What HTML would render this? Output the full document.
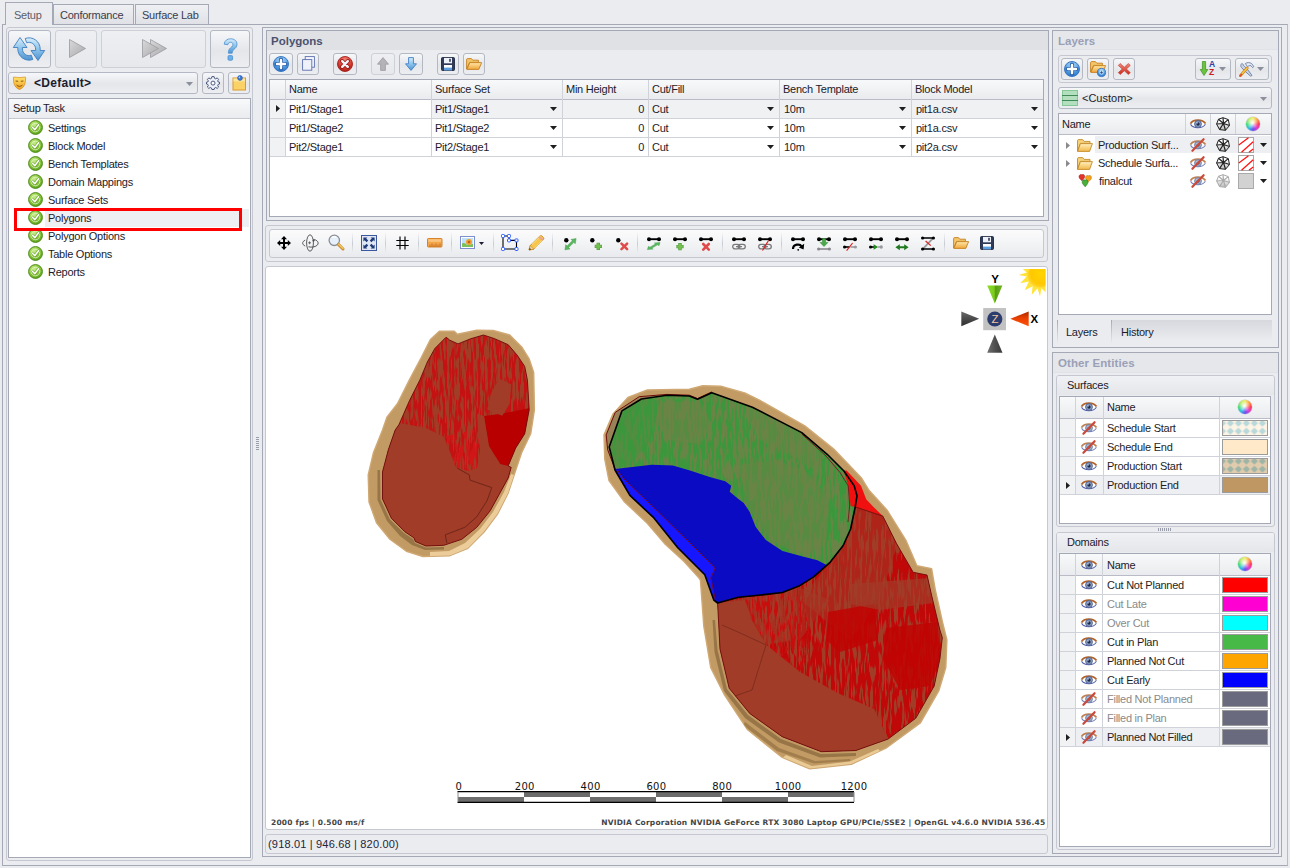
<!DOCTYPE html>
<html><head><meta charset="utf-8"><title>Polygons</title>
<style>
*{box-sizing:border-box;margin:0;padding:0}
html,body{width:1290px;height:868px;overflow:hidden}
body{background:#ebecf0;font-family:"Liberation Sans",sans-serif;font-size:11px;color:#1b1b2b;position:relative;letter-spacing:-0.25px}
.a{position:absolute}
.bd{border:1px solid #a5a9b5}
.bl{border:1px solid #c5c8d0;border-radius:3px}
.w{background:#fff}
.t{position:absolute;white-space:nowrap;line-height:13px}
.btn{position:absolute;border:1px solid #b4b8c2;border-radius:3px;background:linear-gradient(#f6f7f9,#e4e6ea 55%,#eceef1)}
.btnd{position:absolute;border:1px solid #cdd0d7;border-radius:3px;background:linear-gradient(#eeeff2,#e6e8ec)}
.hd{background:linear-gradient(#f8f9fa,#e9ebee)}
svg{position:absolute;overflow:visible}
.cw{position:absolute;width:14px;height:14px;border-radius:50%;background:radial-gradient(circle at 45% 42%,#fff 0,rgba(255,255,255,0.7) 18%,rgba(255,255,255,0) 55%),conic-gradient(from 0deg,#e8e84a 0,#ff9a3a 12%,#ff3a5a 25%,#e040d0 38%,#6a50f0 50%,#30c0e8 62%,#30d868 75%,#a8e840 88%,#e8e84a 100%);box-shadow:0 0 0 0.5px #c8c8d0}
</style></head><body>

<!-- ============ TABS ============ -->
<div class="a" style="left:2px;top:24px;width:1286px;height:842px;border:1px solid #a5a9b5;border-right-color:#b9bcc6"></div>
<div class="a" style="left:53px;top:4px;width:81px;height:21px;border:1px solid #a5a9b5;background:linear-gradient(#eff0f3,#dfe1e6)"></div>
<div class="a" style="left:135px;top:4px;width:74px;height:21px;border:1px solid #a5a9b5;background:linear-gradient(#eff0f3,#dfe1e6)"></div>
<div class="a" style="left:5px;top:2px;width:48px;height:23px;border:1px solid #a5a9b5;border-bottom:none;background:#ebecef"></div>
<div class="t" style="left:14px;top:9px;color:#5a5d6b">Setup</div>
<div class="t" style="left:60px;top:9px;color:#3a3d4d">Conformance</div>
<div class="t" style="left:142px;top:9px;color:#3a3d4d">Surface Lab</div>

<!-- ============ LEFT PANEL ============ -->
<svg width="0" height="0" style="left:0;top:0"><defs>
<radialGradient id="gchk" cx="0.4" cy="0.3" r="0.8"><stop offset="0" stop-color="#c9ee8a"/><stop offset="0.55" stop-color="#86c536"/><stop offset="1" stop-color="#4e9a12"/></radialGradient>
<linearGradient id="gblue" x1="0" y1="0" x2="0" y2="1"><stop offset="0" stop-color="#d8eefb"/><stop offset="0.5" stop-color="#8cc3ea"/><stop offset="1" stop-color="#4f93d2"/></linearGradient>
<linearGradient id="ggray" x1="0" y1="0" x2="1" y2="1"><stop offset="0" stop-color="#d9d9db"/><stop offset="1" stop-color="#a9a9ad"/></linearGradient>
<linearGradient id="gyel" x1="0" y1="0" x2="0" y2="1"><stop offset="0" stop-color="#ffe36a"/><stop offset="1" stop-color="#f0a020"/></linearGradient>
<g id="chk"><circle cx="7.5" cy="7.5" r="6.9" fill="url(#gchk)" stroke="#4f8a1b" stroke-width="1"/><circle cx="7.5" cy="7.5" r="4.3" fill="none" stroke="#e9f7d0" stroke-width="0.9" opacity="0.85"/><path d="M4.6 7.6 L6.8 9.9 L10.6 4.9" fill="none" stroke="#3d6f12" stroke-width="2.6" stroke-linecap="round" stroke-linejoin="round" opacity="0.55"/><path d="M4.6 7.4 L6.8 9.7 L10.6 4.7" fill="none" stroke="#fff" stroke-width="1.5" stroke-linecap="round" stroke-linejoin="round"/></g>
<g id="eye"><path d="M0.6 6 C3 1.6 12.5 1.6 15.4 6 C12.5 10.6 3 10.6 0.6 6 Z" fill="#fff"/><path d="M0.6 6.3 C3 10.9 12.5 10.9 15.4 6.3" fill="none" stroke="#4e5ca8" stroke-width="1.1"/><path d="M0.5 5.6 C3 0.9 12.5 0.9 15.5 5.6" fill="none" stroke="#b0622a" stroke-width="1.8"/><circle cx="8" cy="6" r="3.4" fill="#8fa3c8" stroke="#4a5c8a" stroke-width="0.9"/><circle cx="8" cy="6" r="1.7" fill="#1d2a4a"/><circle cx="7.1" cy="4.9" r="0.7" fill="#e6eefc"/></g>
<g id="eyeoff"><use href="#eye" opacity="0.8"/><path d="M2.4 11.8 L13.6 0.2" stroke="#c94a3a" stroke-width="2.2" stroke-linecap="round"/></g>
<g id="wire" stroke-width="1"><path d="M7 0.7 L12.3 2.6 L13.5 8.5 L9.5 13.3 L3.5 12.6 L0.6 7 L2.5 2.2 Z" fill="url(#gwire)"/><path d="M7.5 6.5 L7 0.7 M7.5 6.5 L12.3 2.6 M7.5 6.5 L13.5 8.5 M7.5 6.5 L9.5 13.3 M7.5 6.5 L3.5 12.6 M7.5 6.5 L0.6 7 M7.5 6.5 L2.5 2.2" fill="none" stroke-width="1.2"/></g>
<linearGradient id="gwire" x1="0" y1="0" x2="0" y2="1"><stop offset="0.3" stop-color="#fff"/><stop offset="1" stop-color="#b8b8b8"/></linearGradient>
<g id="fold"><path d="M0.5 12.2 L0.5 1.6 C0.5 1 1 0.6 1.6 0.6 L5.6 0.6 L7.2 2.4 L13 2.4 L13 4.4 L3.4 4.4 Z" fill="#f6d27a" stroke="#c48a2a" stroke-width="0.9" stroke-linejoin="round"/><path d="M0.6 12.4 L3.4 4.6 L15.4 4.6 L12.6 12.4 Z" fill="url(#gfold)" stroke="#c48a2a" stroke-width="0.9" stroke-linejoin="round"/></g>
<linearGradient id="gfold" x1="0" y1="0" x2="0" y2="1"><stop offset="0" stop-color="#fff0c0"/><stop offset="1" stop-color="#f2b84a"/></linearGradient>
<g id="hearts"><path d="M4 0.8 C5.5 -0.2 7 1 6.6 3 C6.3 4.6 5 5.8 4 6.8 C3 5.8 1.2 4.6 1 3 C0.8 1 2.6 -0.2 4 0.8 Z" fill="#e4332a" stroke="#9a1a14" stroke-width="0.5"/><path d="M10.5 1.8 C12 0.8 13.8 2 13.4 4 C13.1 5.6 11.5 6.8 10.5 7.8 C9.5 6.8 7.8 5.6 7.6 4 C7.4 2 9 0.8 10.5 1.8 Z" fill="#f6a21c" stroke="#b06a0a" stroke-width="0.5"/><path d="M7.2 6.2 C8.7 5.2 10.4 6.4 10 8.4 C9.7 10 8.2 11.6 7.2 12.8 C6.2 11.6 4.4 10 4.2 8.4 C4 6.4 5.7 5.2 7.2 6.2 Z" fill="#49b03a" stroke="#226a18" stroke-width="0.5"/></g>
<radialGradient id="gbl2" cx="0.5" cy="0.25" r="0.8"><stop offset="0" stop-color="#b9defa"/><stop offset="0.6" stop-color="#4d9be0"/><stop offset="1" stop-color="#2a6cc0"/></radialGradient>
<radialGradient id="grd2" cx="0.5" cy="0.25" r="0.8"><stop offset="0" stop-color="#f28a80"/><stop offset="0.6" stop-color="#d8362c"/><stop offset="1" stop-color="#a81a14"/></radialGradient>
<g id="addc"><circle cx="8" cy="8" r="7.5" fill="url(#gbl2)" stroke="#2f6fc0" stroke-width="0.9"/><path d="M8 3.6 V12.4 M3.6 8 H12.4" stroke="#2c62aa" stroke-width="4.2" stroke-linecap="round"/><path d="M8 4 V12 M4 8 H12" stroke="#fff" stroke-width="2.4" stroke-linecap="round"/></g>
<g id="delc"><circle cx="8" cy="8" r="7.5" fill="url(#grd2)" stroke="#a3211a" stroke-width="0.9"/><path d="M5 5 L11 11 M11 5 L5 11" stroke="#9c1d17" stroke-width="4" stroke-linecap="round"/><path d="M5.2 5.2 L10.8 10.8 M10.8 5.2 L5.2 10.8" stroke="#f4f4fa" stroke-width="2.4" stroke-linecap="round"/></g>
<linearGradient id="gfo" x1="0" y1="0" x2="0" y2="1"><stop offset="0" stop-color="#ffe7a8"/><stop offset="1" stop-color="#f0a63a"/></linearGradient>
<g id="fopen"><path d="M0.6 11 L0.6 1.6 C0.6 1 1 0.6 1.6 0.6 L5.4 0.6 L6.8 2.2 L12.4 2.2 L12.4 4.4 L3.6 4.4 Z" fill="#f4c66a" stroke="#c4801f" stroke-width="0.9" stroke-linejoin="round"/><path d="M0.8 11.4 L3.8 4.6 L15.6 4.6 L12.8 11.4 Z" fill="url(#gfo)" stroke="#c4801f" stroke-width="0.9" stroke-linejoin="round"/></g>
<g id="floppy"><rect x="0.5" y="0.5" width="13" height="13" rx="1" fill="#2f3b58" stroke="#1d2740" stroke-width="0.9"/><rect x="3" y="0.9" width="8" height="5.4" fill="#eef1f8"/><rect x="8.2" y="1.8" width="1.6" height="3" fill="#2f3b58"/><rect x="3" y="8" width="8" height="5.2" fill="#fff"/><rect x="3" y="10.6" width="8" height="2.6" fill="#5aa0e0"/></g>
<g id="bar"><path d="M2 2.2 H12" stroke="#000" stroke-width="1.9"/><circle cx="2" cy="2.2" r="2" fill="#000"/><circle cx="12" cy="2.2" r="2" fill="#000"/></g>
<g id="gplus"><path d="M4 0.4 V7.6 M0.4 4 H7.6" stroke="#4f9a3a" stroke-width="3.4"/><path d="M4 0.9 V7.1 M0.9 4 H7.1" stroke="#74c050" stroke-width="2.2"/></g>
<g id="rx"><path d="M1.2 1.2 L6.8 6.8 M6.8 1.2 L1.2 6.8" stroke="#e04a4a" stroke-width="2.6" stroke-linecap="round"/></g>
<g id="garr"><path d="M0.4 11.6 L1.25 6.5 L2.6 7.85 L7.85 2.6 L6.5 1.25 L11.6 0.4 L10.75 5.5 L9.4 4.15 L4.15 9.4 L5.5 10.75 Z" fill="#5cb860" stroke="#3d9a4a" stroke-width="0.5"/></g>
<g id="chain"><rect x="0.7" y="0.7" width="7.2" height="4.6" rx="2.3" fill="none" stroke="#7a7a7e" stroke-width="1.3"/><rect x="6.1" y="0.7" width="7.2" height="4.6" rx="2.3" fill="none" stroke="#7a7a7e" stroke-width="1.3"/><path d="M4 3 H10" stroke="#7a7a7e" stroke-width="1.2"/></g>
<path id="dd" d="M0 0 L7 0 L3.5 4 Z"/>
</defs></svg>
<div id="left">
<div class="a bl" style="left:6px;top:27px;width:247px;height:834px"></div>
<div class="btn" style="left:8px;top:30px;width:43px;height:38px"></div>
<div class="btnd" style="left:55px;top:30px;width:42px;height:38px"></div>
<div class="btnd" style="left:101px;top:30px;width:105px;height:38px"></div>
<div class="btn" style="left:210px;top:30px;width:40px;height:38px"></div>
<!-- refresh icon -->
<svg style="left:13px;top:37px" width="32" height="24" viewBox="0 0 32 24">
<path d="M7 0.5 L14 10.5 L9.4 10.5 L9.4 12 A6.6 6.6 0 0 0 18.3 18.2 L19.8 22.5 A11.2 11.2 0 0 1 4.8 12 L4.8 10.5 L0.3 10.5 Z" fill="url(#gblue)" stroke="#3f7fc0" stroke-width="0.9" stroke-linejoin="round"/>
<path d="M25 23.5 L18 13.5 L22.6 13.5 L22.6 12 A6.6 6.6 0 0 0 13.7 5.8 L12.2 1.5 A11.2 11.2 0 0 1 27.2 12 L27.2 13.5 L31.7 13.5 Z" fill="url(#gblue)" stroke="#3f7fc0" stroke-width="0.9" stroke-linejoin="round"/>
</svg>
<!-- play / ff -->
<svg style="left:69px;top:39px" width="17" height="19"><path d="M0.5 0.5 L16.5 9.5 L0.5 18.5 Z" fill="url(#ggray)" stroke="#9a9a9e" stroke-width="0.8"/></svg>
<svg style="left:142px;top:39px" width="26" height="19"><path d="M8.5 0.5 L24.5 9.5 L8.5 18.5 Z" fill="url(#ggray)" stroke="#9a9a9e" stroke-width="0.8"/><path d="M0.5 0.5 L16.5 9.5 L0.5 18.5 Z" fill="url(#ggray)" stroke="#9a9a9e" stroke-width="0.8"/></svg>
<!-- question -->
<svg style="left:223px;top:38px" width="15" height="23" viewBox="0 0 15 23">
<path d="M1.2 6.2 C1.5 2.5 4.3 0.8 7.6 0.8 C11.3 0.8 14 2.9 14 6.3 C14 9 12.3 10.3 10.8 11.6 C9.6 12.6 9.2 13.4 9.2 15.2 L5.4 15.2 C5.3 12.6 6 11.2 7.6 9.8 C8.9 8.7 9.9 7.9 9.9 6.5 C9.9 5.1 8.9 4.3 7.5 4.3 C6 4.3 5.1 5.2 4.9 6.7 Z" fill="url(#gblue)" stroke="#4a8fd3" stroke-width="0.8"/>
<rect x="5" y="17.6" width="4.6" height="4.6" rx="1" fill="#6fb0e8" stroke="#4a8fd3" stroke-width="0.8"/>
</svg>
<div class="btn" style="left:8px;top:72px;width:190px;height:22px"></div>
<div class="btn" style="left:202px;top:72px;width:22px;height:22px"></div>
<div class="btn" style="left:228px;top:72px;width:22px;height:22px"></div>
<!-- mask -->
<svg style="left:13px;top:76px" width="13" height="14" viewBox="0 0 13 14">
<path d="M0.5 1.2 C2.5 0.9 4 1.6 6.5 1.6 C9 1.6 10.5 0.9 12.5 1.2 C12.8 6 12 11.5 6.5 13.5 C1 11.5 0.2 6 0.5 1.2 Z" fill="url(#gyel)" stroke="#d98a14" stroke-width="0.7"/>
<path d="M2.6 5 L5.2 5.3 M7.8 5.3 L10.4 5" stroke="#7a4a08" stroke-width="0.9" fill="none"/>
<path d="M3.6 9 C5 10.8 8 10.8 9.4 9" stroke="#7a4a08" stroke-width="0.9" fill="none"/>
</svg>
<div class="t" style="left:34px;top:77px;font-weight:bold;font-size:12px;letter-spacing:0.3px;color:#1a1c2e">&lt;Default&gt;</div>
<svg style="left:186px;top:82px" width="7" height="4"><use href="#dd" fill="#8c8f9c"/></svg>
<!-- gear -->
<svg style="left:206px;top:76px" width="14" height="14" viewBox="0 0 14 14">
<path d="M5.9 0.6 L8.1 0.6 L8.5 2.3 L9.7 2.8 L11.2 1.9 L12.6 3.4 L11.7 4.8 L12.2 6 L13.5 6.2 L13.5 8 L12.2 8.4 L11.7 9.5 L12.6 11 L11.2 12.4 L9.7 11.5 L8.5 12 L8.1 13.5 L5.9 13.5 L5.5 12 L4.3 11.5 L2.8 12.4 L1.4 11 L2.3 9.5 L1.8 8.4 L0.5 8 L0.5 6.2 L1.8 6 L2.3 4.8 L1.4 3.4 L2.8 1.9 L4.3 2.8 L5.5 2.3 Z" fill="#eef1f7" stroke="#3b4a74" stroke-width="0.9" stroke-linejoin="round"/>
<circle cx="7" cy="7.1" r="2" fill="#fff" stroke="#3b4a74" stroke-width="0.9"/>
</svg>
<!-- note -->
<svg style="left:232px;top:75px" width="15" height="16" viewBox="0 0 15 16">
<rect x="1" y="3" width="12.5" height="12" fill="#fbd268" stroke="#dc9a2c" stroke-width="1"/>
<rect x="1.5" y="3.5" width="11.5" height="3" fill="#fde59a"/>
<circle cx="8" cy="3" r="2.4" fill="#3b78d8" stroke="#1f4fa8" stroke-width="0.6"/><circle cx="7.4" cy="2.4" r="0.8" fill="#b8d4ff"/>
</svg>
<div class="a bd w" style="left:8px;top:98px;width:243px;height:760px"></div>
<div class="a hd" style="left:9px;top:99px;width:241px;height:20px;border-bottom:1px solid #c5c8d0"></div>
<div class="t" style="left:13px;top:102px">Setup Task</div>
<div class="a" style="left:45px;top:209px;width:204px;height:18px;background:#eeeff2"></div>
<svg style="left:28px;top:120.1px" width="15" height="15"><use href="#chk"/></svg><div class="t" style="left:48px;top:122px">Settings</div>
<svg style="left:28px;top:138.1px" width="15" height="15"><use href="#chk"/></svg><div class="t" style="left:48px;top:140px">Block Model</div>
<svg style="left:28px;top:156.1px" width="15" height="15"><use href="#chk"/></svg><div class="t" style="left:48px;top:158px">Bench Templates</div>
<svg style="left:28px;top:174.1px" width="15" height="15"><use href="#chk"/></svg><div class="t" style="left:48px;top:176px">Domain Mappings</div>
<svg style="left:28px;top:192.1px" width="15" height="15"><use href="#chk"/></svg><div class="t" style="left:48px;top:194px">Surface Sets</div>
<svg style="left:28px;top:210.1px" width="15" height="15"><use href="#chk"/></svg><div class="t" style="left:48px;top:212px">Polygons</div>
<svg style="left:28px;top:228.1px" width="15" height="15"><use href="#chk"/></svg><div class="t" style="left:48px;top:230px">Polygon Options</div>
<svg style="left:28px;top:246.1px" width="15" height="15"><use href="#chk"/></svg><div class="t" style="left:48px;top:248px">Table Options</div>
<svg style="left:28px;top:264.1px" width="15" height="15"><use href="#chk"/></svg><div class="t" style="left:48px;top:266px">Reports</div>
<div class="a" style="left:14px;top:208px;width:228px;height:23px;border:3px solid #f00"></div>
</div>

<svg style="left:256px;top:437px" width="3" height="14"><path d="M0 0.5 H3 M0 2.5 H3 M0 4.5 H3 M0 6.5 H3 M0 8.5 H3 M0 10.5 H3 M0 12.5 H3" stroke="#9a9eab" stroke-width="1"/></svg>
<!-- ============ CENTER ============ -->
<div id="center">
<div class="a bd" style="left:262px;top:27px;width:1020px;height:830px"></div>
<div class="a bd" style="left:266px;top:30px;width:783px;height:191px"></div>
<div class="a" style="left:267px;top:31px;width:781px;height:19px;background:#dfe1e5"></div>
<div class="t" style="left:271px;top:35px;font-weight:bold;font-size:11.5px;color:#4a5170;letter-spacing:0">Polygons</div>
<div class="btn" style="left:269px;top:53px;width:24px;height:22px"></div>
<div class="btn" style="left:297px;top:53px;width:22px;height:22px"></div>
<div class="btn" style="left:333px;top:53px;width:24px;height:22px"></div>
<div class="btnd" style="left:371px;top:53px;width:24px;height:22px"></div>
<div class="btn" style="left:399px;top:53px;width:24px;height:22px"></div>
<div class="btn" style="left:437px;top:53px;width:22px;height:22px"></div>
<div class="btn" style="left:463px;top:53px;width:22px;height:22px"></div>
<svg style="left:273px;top:56px" width="16" height="16"><use href="#addc"/></svg>
<svg style="left:302px;top:56px" width="13" height="15"><rect x="3.2" y="0.6" width="9.2" height="10.6" fill="#f4f6fc" stroke="#5c6fb0" stroke-width="0.9"/><rect x="0.6" y="3.6" width="9.2" height="10.6" fill="#eef1fa" stroke="#5c6fb0" stroke-width="0.9"/></svg>
<svg style="left:337px;top:56px" width="16" height="16"><use href="#delc"/></svg>
<svg style="left:377px;top:57px" width="12" height="14"><path d="M6 0.6 L11.5 7.2 L8.4 7.2 L8.4 13.4 L3.6 13.4 L3.6 7.2 L0.5 7.2 Z" fill="#b4b4b8" stroke="#9c9ca0" stroke-width="0.8" stroke-linejoin="round"/></svg>
<svg style="left:405px;top:57px" width="12" height="14"><path d="M6 13.4 L11.5 6.8 L8.4 6.8 L8.4 0.6 L3.6 0.6 L3.6 6.8 L0.5 6.8 Z" fill="url(#gblue)" stroke="#3f7fc8" stroke-width="0.9" stroke-linejoin="round"/></svg>
<svg style="left:441px;top:57px" width="14" height="14"><use href="#floppy"/></svg>
<svg style="left:466px;top:58px" width="16" height="12"><use href="#fopen"/></svg>

<div class="a bd w" style="left:269px;top:79px;width:775px;height:138px"></div>
<div class="a hd" style="left:270px;top:80px;width:773px;height:19px"></div>
<div class="a" style="left:270px;top:99px;width:773px;height:1px;background:#b9bcc6"></div>
<div class="a" style="left:285px;top:80px;width:1px;height:77px;background:#cfd2d9"></div><div class="t" style="left:289px;top:83px">Name</div>
<div class="a" style="left:431px;top:80px;width:1px;height:77px;background:#cfd2d9"></div><div class="t" style="left:435px;top:83px">Surface Set</div>
<div class="a" style="left:562px;top:80px;width:1px;height:77px;background:#cfd2d9"></div><div class="t" style="left:566px;top:83px">Min Height</div>
<div class="a" style="left:648px;top:80px;width:1px;height:77px;background:#cfd2d9"></div><div class="t" style="left:652px;top:83px">Cut/Fill</div>
<div class="a" style="left:779px;top:80px;width:1px;height:77px;background:#cfd2d9"></div><div class="t" style="left:783px;top:83px">Bench Template</div>
<div class="a" style="left:911px;top:80px;width:1px;height:77px;background:#cfd2d9"></div><div class="t" style="left:915px;top:83px">Block Model</div>
<div class="a" style="left:270px;top:100px;width:15px;height:57px;background:#f1f2f4"></div>
<div class="a" style="left:286px;top:100px;width:757px;height:18px;background:#f0f1f3"></div>
<div class="a" style="left:286px;top:100px;width:145px;height:18px;background:#fff"></div>
<div class="a" style="left:270px;top:118px;width:773px;height:1px;background:#cfd2d9"></div>
<div class="t" style="left:289px;top:103px">Pit1/Stage1</div><div class="t" style="left:435px;top:103px">Pit1/Stage1</div><div class="t" style="left:600px;width:44px;text-align:right;top:103px">0</div><div class="t" style="left:652px;top:103px">Cut</div><div class="t" style="left:784px;top:103px">10m</div><div class="t" style="left:916px;top:103px">pit1a.csv</div>
<svg style="left:550px;top:107px" width="7" height="4"><use href="#dd" fill="#1e1e1e"/></svg><svg style="left:767px;top:107px" width="7" height="4"><use href="#dd" fill="#1e1e1e"/></svg><svg style="left:899px;top:107px" width="7" height="4"><use href="#dd" fill="#1e1e1e"/></svg><svg style="left:1031px;top:107px" width="7" height="4"><use href="#dd" fill="#1e1e1e"/></svg>
<div class="a" style="left:270px;top:137px;width:773px;height:1px;background:#cfd2d9"></div>
<div class="t" style="left:289px;top:122px">Pit1/Stage2</div><div class="t" style="left:435px;top:122px">Pit1/Stage2</div><div class="t" style="left:600px;width:44px;text-align:right;top:122px">0</div><div class="t" style="left:652px;top:122px">Cut</div><div class="t" style="left:784px;top:122px">10m</div><div class="t" style="left:916px;top:122px">pit1a.csv</div>
<svg style="left:550px;top:126px" width="7" height="4"><use href="#dd" fill="#1e1e1e"/></svg><svg style="left:767px;top:126px" width="7" height="4"><use href="#dd" fill="#1e1e1e"/></svg><svg style="left:899px;top:126px" width="7" height="4"><use href="#dd" fill="#1e1e1e"/></svg><svg style="left:1031px;top:126px" width="7" height="4"><use href="#dd" fill="#1e1e1e"/></svg>
<div class="a" style="left:270px;top:156px;width:773px;height:1px;background:#cfd2d9"></div>
<div class="t" style="left:289px;top:141px">Pit2/Stage1</div><div class="t" style="left:435px;top:141px">Pit2/Stage1</div><div class="t" style="left:600px;width:44px;text-align:right;top:141px">0</div><div class="t" style="left:652px;top:141px">Cut</div><div class="t" style="left:784px;top:141px">10m</div><div class="t" style="left:916px;top:141px">pit2a.csv</div>
<svg style="left:550px;top:145px" width="7" height="4"><use href="#dd" fill="#1e1e1e"/></svg><svg style="left:767px;top:145px" width="7" height="4"><use href="#dd" fill="#1e1e1e"/></svg><svg style="left:899px;top:145px" width="7" height="4"><use href="#dd" fill="#1e1e1e"/></svg><svg style="left:1031px;top:145px" width="7" height="4"><use href="#dd" fill="#1e1e1e"/></svg>
<div class="a" style="left:285px;top:100px;width:1px;height:57px;background:#cfd2d9"></div><div class="a" style="left:431px;top:100px;width:1px;height:57px;background:#cfd2d9"></div><div class="a" style="left:562px;top:100px;width:1px;height:57px;background:#cfd2d9"></div><div class="a" style="left:648px;top:100px;width:1px;height:57px;background:#cfd2d9"></div><div class="a" style="left:779px;top:100px;width:1px;height:57px;background:#cfd2d9"></div><div class="a" style="left:911px;top:100px;width:1px;height:57px;background:#cfd2d9"></div>
<svg style="left:276px;top:105px" width="4" height="7"><path d="M0 0 L4 3.5 L0 7 Z" fill="#1e1e1e"/></svg>

<!-- viewport toolbar -->
<div class="a bl" style="left:265px;top:225px;width:783px;height:37px"></div>
<div class="a" style="left:269px;top:229px;width:775px;height:29px;border:1px solid #c5c8d0;border-radius:3px;background:linear-gradient(#fbfbfc,#f1f2f4 60%,#e9eaee)"></div>
<svg style="left:277px;top:236px" width="14" height="14"><path d="M7 0 L10 3.2 L8 3.2 L8 6 L10.8 6 L10.8 4 L14 7 L10.8 10 L10.8 8 L8 8 L8 10.8 L10 10.8 L7 14 L4 10.8 L6 10.8 L6 8 L3.2 8 L3.2 10 L0 7 L3.2 4 L3.2 6 L6 6 L6 3.2 L4 3.2 Z" fill="#000"/></svg>
<svg style="left:302px;top:234px" width="17" height="18" fill="none" stroke="#4a4a4e" stroke-width="0.9"><ellipse cx="8" cy="9" rx="3.4" ry="8.2"/><path d="M3.2 6.2 C-0.2 7.6 -0.2 10.6 3.2 12 M11.5 5.4 C17.5 6.4 17.8 11.4 12 12.8 C10 13.3 8 13.2 6.4 12.8"/><path d="M6.2 8.8 H9 M7.6 7.4 V10.2 M10.4 6.6 H12.8 M11.6 5.4 V7.8" stroke-width="0.8"/></svg>
<svg style="left:328px;top:234px" width="17" height="17"><circle cx="6.3" cy="6.3" r="5.2" fill="#e6f0fa" stroke="#8a8d94" stroke-width="1.3"/><path d="M4 3.6 C5.2 2.6 7 2.6 8.2 3.4" stroke="#fff" stroke-width="1.2" fill="none"/><path d="M10.4 10.4 L15 15" stroke="#c98a28" stroke-width="3" stroke-linecap="round"/><path d="M10.6 10.2 L15 14.6" stroke="#f5c562" stroke-width="1.4" stroke-linecap="round"/></svg>
<div class="a" style="left:352px;top:233px;width:1px;height:21px;background:linear-gradient(#f4f4f6,#c9ccd4 50%,#f0f0f3)"></div><svg style="left:361px;top:235px" width="16" height="16"><rect x="0.5" y="0.5" width="15" height="15" fill="#dfe6f4" stroke="#3c57a0" stroke-width="1"/><g fill="#1f3a78"><path d="M2.4 2.4 L6.4 2.4 L5.2 3.6 L7.2 5.6 L5.6 7.2 L3.6 5.2 L2.4 6.4 Z"/><path d="M13.6 2.4 L13.6 6.4 L12.4 5.2 L10.4 7.2 L8.8 5.6 L10.8 3.6 L9.6 2.4 Z"/><path d="M2.4 13.6 L2.4 9.6 L3.6 10.8 L5.6 8.8 L7.2 10.4 L5.2 12.4 L6.4 13.6 Z"/><path d="M13.6 13.6 L9.6 13.6 L10.8 12.4 L8.8 10.4 L10.4 8.8 L12.4 10.8 L13.6 9.6 Z"/></g></svg>
<div class="a" style="left:385px;top:233px;width:1px;height:21px;background:linear-gradient(#f4f4f6,#c9ccd4 50%,#f0f0f3)"></div><svg style="left:396px;top:236px" width="13" height="14"><path d="M4 0.5 V13.5 M9 0.5 V13.5 M0.3 4.5 H12.7 M0.3 9.5 H12.7" stroke="#000" stroke-width="1.15" fill="none"/></svg>
<div class="a" style="left:418px;top:233px;width:1px;height:21px;background:linear-gradient(#f4f4f6,#c9ccd4 50%,#f0f0f3)"></div><svg style="left:427px;top:238px" width="16" height="10"><rect x="0.5" y="0.5" width="14.5" height="8.5" rx="0.8" fill="#f5a54a" stroke="#d47a1c" stroke-width="0.9"/><rect x="1.2" y="1.2" width="13" height="2.6" fill="#fbc57e"/><path d="M3 9 V6.5 M5 9 V5.5 M7 9 V6.5 M9 9 V5.5 M11 9 V6.5 M13 9 V5.5" stroke="#b9651a" stroke-width="0.8"/></svg>
<div class="a" style="left:451px;top:233px;width:1px;height:21px;background:linear-gradient(#f4f4f6,#c9ccd4 50%,#f0f0f3)"></div><svg style="left:460px;top:236px" width="15" height="13"><rect x="0.5" y="0.5" width="14" height="12" fill="#fff" stroke="#7d8fd0" stroke-width="1"/><rect x="2" y="2" width="11" height="9" fill="#bfe0f6"/><path d="M2 11 L2 7.5 C4 6.5 6 7.5 7 9 L13 8 L13 11 Z" fill="#7cc05a"/><circle cx="9" cy="6" r="3" fill="#f0a030"/><circle cx="9" cy="6" r="1.3" fill="#c0601a"/></svg><svg style="left:479px;top:242px" width="5" height="3"><path d="M0 0 H5 L2.5 3 Z" fill="#1a1c2e"/></svg>
<div class="a" style="left:493px;top:233px;width:1px;height:21px;background:linear-gradient(#f4f4f6,#c9ccd4 50%,#f0f0f3)"></div><svg style="left:501px;top:234px" width="18" height="17"><path d="M2 2 H8 V6.4 H15.5 V15 H2 Z" fill="none" stroke="#000" stroke-width="1.1"/><g fill="#fff" stroke="#2a5cff" stroke-width="1"><rect x="0.5" y="0.5" width="3" height="3" rx="0.8"/><rect x="6.5" y="0.5" width="3" height="3" rx="0.8"/><rect x="6.5" y="4.9" width="3" height="3" rx="0.8"/><rect x="14" y="4.9" width="3" height="3" rx="0.8"/><rect x="14" y="13.5" width="3" height="3" rx="0.8"/><rect x="0.5" y="13.5" width="3" height="3" rx="0.8"/></g></svg>
<svg style="left:528px;top:235px" width="17" height="16"><path d="M1 15 L2.2 10.6 L11.6 1.2 C12.4 0.4 13.4 0.4 14.2 1.2 L15.2 2.2 C16 3 16 4 15.2 4.8 L5.8 14.2 Z" fill="#f7c648" stroke="#c8861c" stroke-width="0.9" stroke-linejoin="round"/><path d="M4 9.4 L12.4 1.2 M6.4 13.2 L14.8 4.8" stroke="#fbe39a" stroke-width="1"/><path d="M1 15 L2.2 10.6 L5.8 14.2 Z" fill="#f0d8b0" stroke="#c8861c" stroke-width="0.7"/><path d="M1 15 L1.6 12.8 L3.4 14.4 Z" fill="#6a4a1a"/><path d="M11.2 1.8 L14.8 5.2" stroke="#e8a0a0" stroke-width="1.6"/></svg>
<div class="a" style="left:552px;top:233px;width:1px;height:21px;background:linear-gradient(#f4f4f6,#c9ccd4 50%,#f0f0f3)"></div><svg style="left:564px;top:238px" width="13" height="13"><g transform="translate(0.5,0.2)"><use href="#garr"/></g><circle cx="2.3" cy="2.3" r="2.2" fill="#000"/></svg>
<svg style="left:590px;top:238px" width="13" height="13"><circle cx="2.3" cy="2.3" r="2.2" fill="#000"/><g transform="translate(4.3,4.4)"><use href="#gplus"/></g></svg>
<svg style="left:616px;top:238px" width="13" height="13"><circle cx="2.3" cy="2.3" r="2.2" fill="#000"/><g transform="translate(4.3,4.4)"><use href="#rx"/></g></svg>
<div class="a" style="left:637px;top:233px;width:1px;height:21px;background:linear-gradient(#f4f4f6,#c9ccd4 50%,#f0f0f3)"></div><svg style="left:647px;top:237px" width="14" height="14"><use href="#bar"/><g transform="translate(0,5.2) scale(1.12,0.64)"><use href="#garr"/></g></svg>
<svg style="left:673px;top:237px" width="14" height="14"><use href="#bar"/><g transform="translate(3,5.6)"><use href="#gplus"/></g></svg>
<svg style="left:699px;top:237px" width="14" height="14"><use href="#bar"/><g transform="translate(3,5.8)"><use href="#rx"/></g></svg>
<div class="a" style="left:722px;top:233px;width:1px;height:21px;background:linear-gradient(#f4f4f6,#c9ccd4 50%,#f0f0f3)"></div><svg style="left:732px;top:237px" width="14" height="14"><use href="#bar"/><g transform="translate(0,6.6)"><use href="#chain"/></g></svg>
<svg style="left:758px;top:237px" width="14" height="14"><use href="#bar"/><g transform="translate(0,6.6)"><use href="#chain"/></g><path d="M4.5 13.5 L10.5 3.5" stroke="#e02020" stroke-width="1.2"/></svg>
<div class="a" style="left:781px;top:233px;width:1px;height:21px;background:linear-gradient(#f4f4f6,#c9ccd4 50%,#f0f0f3)"></div><svg style="left:791px;top:237px" width="14" height="14"><use href="#bar"/><path d="M2 12 C2 7 9 6.4 10.6 9.4" fill="none" stroke="#000" stroke-width="2.2"/><path d="M13.2 6.8 L12.6 12.4 L7.8 10.4 Z" fill="#000"/><circle cx="7.2" cy="12.8" r="0.9" fill="#000"/></svg>
<svg style="left:817px;top:237px" width="14" height="14"><use href="#bar"/><path d="M5.4 1.5 H8.6 V5.4 H11 L7 9.6 L3 5.4 H5.4 Z" fill="#4aa84a" stroke="#2f8a34" stroke-width="0.5"/><path d="M1.5 12 H12.5" stroke="#8a8a8e" stroke-width="1.6"/><circle cx="1.6" cy="12" r="1.6" fill="#8a8a8e"/><circle cx="12.4" cy="12" r="1.6" fill="#8a8a8e"/></svg>
<svg style="left:843px;top:237px" width="14" height="14"><use href="#bar"/><path d="M1.5 10 H6.5" stroke="#000" stroke-width="1.6"/><path d="M7.5 10 H12.5" stroke="#9a9a9e" stroke-width="1.6"/><circle cx="1.6" cy="10" r="1.6" fill="#000"/><circle cx="12.4" cy="10" r="1.6" fill="#9a9a9e"/><path d="M3.6 13.6 L9.6 6" stroke="#e02020" stroke-width="1.2"/></svg>
<svg style="left:869px;top:237px" width="14" height="14"><use href="#bar"/><path d="M1.5 10 H5" stroke="#000" stroke-width="1.6"/><circle cx="1.6" cy="10" r="1.6" fill="#000"/><path d="M4.6 7.2 L9.2 10 L4.6 12.8 Z" fill="#1f8a1f"/><path d="M9 10 H12" stroke="#9a9a9e" stroke-width="1.4"/><circle cx="12.2" cy="10" r="1.7" fill="#9a9a9e"/></svg>
<svg style="left:895px;top:237px" width="14" height="14"><use href="#bar"/><path d="M0.4 10.2 L4.8 7.2 V9.2 H9.2 V7.2 L13.6 10.2 L9.2 13.2 V11.2 H4.8 V13.2 Z" fill="#1f7a1f"/></svg>
<svg style="left:921px;top:236px" width="14" height="15"><path d="M2.4 12.4 L11.6 2.6" stroke="#9a9a9e" stroke-width="1.8"/><path d="M1.5 2 H12.5 M1.5 13 H12.5" stroke="#000" stroke-width="1.7"/><circle cx="1.6" cy="2" r="1.6" fill="#000"/><circle cx="12.4" cy="2" r="1.6" fill="#000"/><circle cx="1.6" cy="13" r="1.6" fill="#000"/><circle cx="12.4" cy="13" r="1.6" fill="#000"/><path d="M4.6 5 L9.8 9.6" stroke="#e02020" stroke-width="1.2"/></svg>
<div class="a" style="left:944px;top:233px;width:1px;height:21px;background:linear-gradient(#f4f4f6,#c9ccd4 50%,#f0f0f3)"></div><svg style="left:953px;top:237px" width="16" height="12"><use href="#fopen"/></svg>
<svg style="left:980px;top:236px" width="14" height="14"><use href="#floppy"/></svg>

<!-- viewport -->
<div class="a w" style="left:265px;top:266px;width:783px;height:564px;border:1px solid #c5c8d0;border-radius:3px"></div>
<!--VIEWSTART--><svg style="left:0;top:0" width="1290" height="868" viewBox="0 0 1290 868">
<defs>
<filter id="fs1" x="0" y="0" width="1" height="1"><feTurbulence type="fractalNoise" baseFrequency="0.42 0.05" numOctaves="2" seed="3" result="n"/><feColorMatrix in="n" type="matrix" values="0 0 0 0 0  0 0 0 0 0  0 0 0 0 0  9 0 0 0 -4.05" result="m"/><feComposite in="SourceGraphic" in2="m" operator="in"/></filter>
<filter id="fs2" x="0" y="0" width="1" height="1"><feTurbulence type="fractalNoise" baseFrequency="0.38 0.045" numOctaves="2" seed="11" result="n"/><feColorMatrix in="n" type="matrix" values="0 0 0 0 0  0 0 0 0 0  0 0 0 0 0  9 0 0 0 -4.4" result="m"/><feComposite in="SourceGraphic" in2="m" operator="in"/></filter>
<filter id="fs3" x="0" y="0" width="1" height="1"><feTurbulence type="fractalNoise" baseFrequency="0.4 0.06" numOctaves="2" seed="7" result="n"/><feColorMatrix in="n" type="matrix" values="0 0 0 0 0  0 0 0 0 0  0 0 0 0 0  9 0 0 0 -4.4" result="m"/><feComposite in="SourceGraphic" in2="m" operator="in"/></filter>
<filter id="blur1" x="-0.1" y="-0.1" width="1.2" height="1.2"><feGaussianBlur stdDeviation="0.7"/></filter>
<clipPath id="cSun"><rect x="1000" y="269" width="45.5" height="40"/></clipPath>
<radialGradient id="gSun" cx="0.55" cy="0.45" r="0.6"><stop offset="0" stop-color="#ffd400"/><stop offset="0.7" stop-color="#ffc800"/><stop offset="1" stop-color="#ffd93a"/></radialGradient>
<linearGradient id="gGreen" x1="0" y1="0" x2="1" y2="0"><stop offset="0" stop-color="#8edc28"/><stop offset="0.45" stop-color="#7ccc1e"/><stop offset="0.55" stop-color="#5a9c14"/><stop offset="1" stop-color="#6fb81e"/></linearGradient>
<linearGradient id="gDk" x1="0" y1="0" x2="0" y2="1"><stop offset="0" stop-color="#6a6a6a"/><stop offset="0.5" stop-color="#4a4a4a"/><stop offset="1" stop-color="#2e2e2e"/></linearGradient>
<linearGradient id="gDk2" x1="0" y1="0" x2="1" y2="0"><stop offset="0" stop-color="#707070"/><stop offset="0.5" stop-color="#505050"/><stop offset="1" stop-color="#3a3a3a"/></linearGradient>
<linearGradient id="gOr" x1="0" y1="0" x2="0" y2="1"><stop offset="0" stop-color="#a82800"/><stop offset="0.45" stop-color="#e84000"/><stop offset="1" stop-color="#ff5208"/></linearGradient>
<clipPath id="cInL"><polygon points="446.1,337.2 449.8,340.2 458.0,343.9 470.8,338.7 483.5,335.0 494.7,338.7 508.2,344.7 517.2,355.2 524.7,366.4 527.4,379.9 529.2,409.8 524.7,433.8 515.7,448.0 508.2,465.9 511.2,467.4 508.2,477.9 499.2,494.4 490.2,510.8 476.8,527.3 461.8,539.3 443.8,545.3 425.9,546.0 415.4,541.5 413.9,537.8 404.9,531.8 391.4,518.3 382.5,498.9 382.5,471.9 388.4,449.5 395.2,430.0 398.9,424.8 409.4,400.8 419.9,379.9 427.4,361.9 434.9,348.4"/></clipPath>
<clipPath id="cBlk"><polygon points="609.2,446.9 621.9,410.9 641.4,399.0 666.9,395.2 689.3,396.0 697.5,399.3 711.8,392.7 752.4,407.2 801.8,432.6 827.2,454.3 843.7,470.8 854.2,485.8 857.0,495.8 855.2,506.9 850.6,529.0 843.2,545.5 830.3,562.1 813.7,576.9 799.0,586.1 782.4,592.5 758.4,595.3 738.4,597.3 717.6,603.0 713.8,600.0 704.8,574.8 677.8,547.8 653.9,517.9 629.9,495.4 615.0,470.0"/></clipPath>
<clipPath id="cLow"><polygon points="855.2,506.9 882.8,516.1 896.6,543.7 913.2,572.3 927.0,575.0 931.6,595.3 939.9,630.0 942.3,637.6 940.0,658.3 934.2,686.0 915.8,718.2 888.2,739.0 855.9,750.5 821.3,751.7 782.2,736.7 749.9,713.6 729.2,688.3 720.0,649.1 717.6,603.0 738.4,597.3 758.4,595.3 782.4,592.5 799.0,586.1 813.7,576.9 830.3,562.1 843.2,545.5 850.6,529.0"/></clipPath>
<clipPath id="cOutL"><polygon points="439.3,331.2 454.3,331.2 457.3,334.2 476.8,330.2 493.2,330.5 509.7,335.0 521.7,346.9 529.2,358.9 533.7,372.4 534.4,409.8 530.7,433.8 521.7,452.5 514.2,474.9 508.2,492.9 497.7,513.8 484.3,531.8 467.8,548.3 449.8,555.7 422.9,556.5 406.4,551.3 389.9,539.3 376.5,522.8 369.0,501.9 368.2,474.9 373.5,452.5 382.5,430.0 386.9,417.3 397.4,403.8 409.4,379.9 421.4,357.4 430.4,339.5"/></clipPath>
<clipPath id="cOutR"><polygon points="604.0,434.9 613.0,413.9 627.9,397.5 647.4,390.0 689.3,389.2 702.8,385.8 720.7,386.2 744.7,393.0 759.9,400.4 804.8,425.9 834.7,449.9 861.7,478.3 869.0,490.3 887.4,510.5 905.8,540.0 916.9,565.8 931.6,568.6 935.3,589.8 942.7,622.9 946.9,640.0 945.8,667.6 938.9,690.6 920.4,722.9 885.9,748.2 851.3,764.3 809.8,768.9 782.2,757.4 747.6,729.8 724.6,695.2 710.7,667.6 703.8,626.1 700.4,580.0 698.8,577.8 683.8,561.3 664.4,543.4 646.4,522.4 624.0,501.4 609.0,480.5 604.7,458.8"/></clipPath>
</defs>
<!-- LEFT PIT -->
<polygon points="439.3,331.2 454.3,331.2 457.3,334.2 476.8,330.2 493.2,330.5 509.7,335.0 521.7,346.9 529.2,358.9 533.7,372.4 534.4,409.8 530.7,433.8 521.7,452.5 514.2,474.9 508.2,492.9 497.7,513.8 484.3,531.8 467.8,548.3 449.8,555.7 422.9,556.5 406.4,551.3 389.9,539.3 376.5,522.8 369.0,501.9 368.2,474.9 373.5,452.5 382.5,430.0 386.9,417.3 397.4,403.8 409.4,379.9 421.4,357.4 430.4,339.5" fill="#c29a64" stroke="#cfa874" stroke-width="1.4" stroke-linejoin="round"/>
<g clip-path="url(#cOutL)">
<path d="M380 470 L380.5 499.5 L390 519.5 L404 533 L413 539 L415 543 L426 547.5 L444 547 L444 549.5 L425 550 L412 545 L400 536 L387 521 L377.5 500 L377.5 470 Z" fill="#8c6c3e" opacity="0.8"/>
<path d="M430 556 L450 555.5 L468 548 L484 531.5 L497.5 513.5 L508 493 L514 475 L511 474 L504 492 L493 512 L480 529 L465 543 L449 551 L430 552 Z" fill="#f3d6a2" opacity="0.85"/>
</g>
<polygon points="446.1,337.2 449.8,340.2 458.0,343.9 470.8,338.7 483.5,335.0 494.7,338.7 508.2,344.7 517.2,355.2 524.7,366.4 527.4,379.9 529.2,409.8 524.7,433.8 515.7,448.0 508.2,465.9 511.2,467.4 508.2,477.9 499.2,494.4 490.2,510.8 476.8,527.3 461.8,539.3 443.8,545.3 425.9,546.0 415.4,541.5 413.9,537.8 404.9,531.8 391.4,518.3 382.5,498.9 382.5,471.9 388.4,449.5 395.2,430.0 398.9,424.8 409.4,400.8 419.9,379.9 427.4,361.9 434.9,348.4" fill="#c41212"/>
<g clip-path="url(#cInL)">
<rect x="380" y="330" width="155" height="150" fill="#a03c28" filter="url(#fs1)"/>
<polygon points="484.0,416.0 500.0,414.0 530.0,408.0 530.0,434.0 516.0,448.0 509.7,465.9 500.7,464.4 488.7,446.5" fill="#b80000"/>
<polygon points="499.2,378.4 511.2,384.4 509.7,403.8 502.2,415.8 487.2,409.8 491.7,391.9" fill="#a03c28"/>
<polygon points="380.0,422.0 400.0,423.0 426.0,428.0 444.0,437.0 450.0,452.0 456.0,467.0 468.0,471.0 477.0,468.0 480.0,450.0 478.0,430.0 477.0,414.0 484.0,416.0 489.0,446.0 500.0,464.0 512.0,467.0 520.0,470.0 520.0,560.0 370.0,560.0" fill="#a03c28"/>
<polygon points="455,468 468,471 477,468 479,440 474,430 446,436 450,452" fill="#d01818" filter="url(#fs2)"/>
<polyline points="457.3,468.2 469.3,474.9 470.0,480.1 491.7,487.6 487.2,500.4 476.8,516.8 464.8,527.3 445.3,534.8 446.8,543.0" fill="none" stroke="#6a2418" stroke-width="0.9"/>
</g>
<polygon points="446.1,337.2 449.8,340.2 458.0,343.9 470.8,338.7 483.5,335.0 494.7,338.7 508.2,344.7 517.2,355.2 524.7,366.4 527.4,379.9 529.2,409.8 524.7,433.8 515.7,448.0 508.2,465.9 511.2,467.4 508.2,477.9 499.2,494.4 490.2,510.8 476.8,527.3 461.8,539.3 443.8,545.3 425.9,546.0 415.4,541.5 413.9,537.8 404.9,531.8 391.4,518.3 382.5,498.9 382.5,471.9 388.4,449.5 395.2,430.0 398.9,424.8 409.4,400.8 419.9,379.9 427.4,361.9 434.9,348.4" fill="none" stroke="#6e0c0c" stroke-width="0.9"/>
<!-- RIGHT PIT -->
<polygon points="604.0,434.9 613.0,413.9 627.9,397.5 647.4,390.0 689.3,389.2 702.8,385.8 720.7,386.2 744.7,393.0 759.9,400.4 804.8,425.9 834.7,449.9 861.7,478.3 869.0,490.3 887.4,510.5 905.8,540.0 916.9,565.8 931.6,568.6 935.3,589.8 942.7,622.9 946.9,640.0 945.8,667.6 938.9,690.6 920.4,722.9 885.9,748.2 851.3,764.3 809.8,768.9 782.2,757.4 747.6,729.8 724.6,695.2 710.7,667.6 703.8,626.1 700.4,580.0 698.8,577.8 683.8,561.3 664.4,543.4 646.4,522.4 624.0,501.4 609.0,480.5 604.7,458.8" fill="#c29a64" stroke="#cfa874" stroke-width="1.4" stroke-linejoin="round"/>
<g clip-path="url(#cOutR)">
<path d="M715 620 L717.5 650 L727 689 L748 715 L781 739 L821 754 L856 753 L856 756 L820 757.5 L779 742.5 L745 718 L724 691 L714.5 652 L712.5 620 Z" fill="#8c6c3e" opacity="0.8"/><path d="M745 722 L779 748 L815 761 L850 759 L850 761 L814 763.5 L777 751 L743 725 Z" fill="#8c6c3e" opacity="0.6"/>
<path d="M783 757.5 L810 768.5 L851 764 L880 751 L878 749 L850 761.5 L812 766 L786 755 Z" fill="#f0d29c" opacity="0.85"/>
</g>
<polygon points="843.7,470.8 846.5,470.6 849.7,473.8 861.0,485.8 866.2,499.3 873.0,506.5 882.8,516.1 855.2,506.9 857.0,495.8 854.2,485.8" fill="#f01010"/>
<polygon points="855.2,506.9 882.8,516.1 896.6,543.7 913.2,572.3 927.0,575.0 931.6,595.3 939.9,630.0 942.3,637.6 940.0,658.3 934.2,686.0 915.8,718.2 888.2,739.0 855.9,750.5 821.3,751.7 782.2,736.7 749.9,713.6 729.2,688.3 720.0,649.1 717.6,603.0 738.4,597.3 758.4,595.3 782.4,592.5 799.0,586.1 813.7,576.9 830.3,562.1 843.2,545.5 850.6,529.0" fill="#c00808"/>
<g clip-path="url(#cLow)">
<rect x="715" y="500" width="232" height="255" fill="#a03c28" filter="url(#fs2)"/>
<polygon points="855,507 883,516 897,544 880,600 850,640 800,600 830,562 850,529" fill="#a03c28" opacity="0.55"/>
<polygon points="828,612 874,604 878,640 840,652 826,640" fill="#c00404" opacity="0.85"/><polygon points="886,628 938,622 940,660 930,686 900,690 884,660" fill="#c00404" opacity="0.85"/><polygon points="849,584 930,578 934,603 880,610 850,604" fill="#a03c28" opacity="0.7"/><polygon points="745,600 800,588 830,600 800,640 770,644" fill="#a03c28" opacity="0.5"/><polygon points="717.6,603.0 745.0,600.0 752.0,620.0 766.0,644.5 800.6,672.2 837.5,692.9 874.3,709.0 884.0,730.0 900.0,760.0 700.0,760.0 700.0,603.0" fill="#a03c28"/>
<polygon points="717,603 745,598 782,593 800,586 790,640 766,645 752,620" fill="#a03c28" opacity="0.6"/>
<polygon points="745,600 800,588 812,640 800,672 766,644.5 752,620" fill="#c81010" filter="url(#fs3)"/>
<polyline points="722,625 738,632 766,645 752,690 735,696" fill="none" stroke="#7a2a1c" stroke-width="0.8"/>
</g>
<polygon points="855.2,506.9 882.8,516.1 896.6,543.7 913.2,572.3 927.0,575.0 931.6,595.3 939.9,630.0 942.3,637.6 940.0,658.3 934.2,686.0 915.8,718.2 888.2,739.0 855.9,750.5 821.3,751.7 782.2,736.7 749.9,713.6 729.2,688.3 720.0,649.1 717.6,603.0 738.4,597.3 758.4,595.3 782.4,592.5 799.0,586.1 813.7,576.9 830.3,562.1 843.2,545.5 850.6,529.0" fill="none" stroke="#6e0c0c" stroke-width="0.9"/>
<polygon points="609.2,446.9 621.9,410.9 641.4,399.0 666.9,395.2 689.3,396.0 697.5,399.3 711.8,392.7 752.4,407.2 801.8,432.6 827.2,454.3 843.7,470.8 854.2,485.8 857.0,495.8 855.2,506.9 850.6,529.0 843.2,545.5 830.3,562.1 813.7,576.9 799.0,586.1 782.4,592.5 758.4,595.3 738.4,597.3 717.6,603.0 713.8,600.0 704.8,574.8 677.8,547.8 653.9,517.9 629.9,495.4 615.0,470.0" fill="#3c963c"/>
<g clip-path="url(#cBlk)">
<rect x="605" y="390" width="255" height="215" fill="#6b8446" filter="url(#fs1)"/>
<polygon points="662,402 700,402 712,425 700,445 668,440 655,420" fill="#6b8446" opacity="0.6"/><polygon points="745,405 775,412 800,432 822,455 815,470 790,455 760,440 748,420" fill="#6b8446" opacity="0.6"/><polygon points="737,465 775,460 805,470 830,500 826,545 800,555 770,540 750,510" fill="#6b8446" opacity="0.6"/><polygon points="612,420 640,400 660,400 650,440 630,466 612,468" fill="#3c963c" opacity="0.5"/>
<polygon points="848.2,485.8 843.7,470.8 854.2,485.8 857.0,495.8 855.2,506.9 850.6,506.0" fill="#f01010"/>
<polygon points="613.0,469.3 632.4,467.1 651.9,464.8 672.8,465.6 690.8,470.8 708.8,476.8 725.2,481.3 731.2,485.8 729.7,491.8 738.7,499.3 743.7,502.9 749.7,511.9 755.7,526.9 765.8,540.0 782.4,551.1 802.7,556.6 817.4,560.3 826.6,564.9 840.0,580.0 800.0,620.0 700.0,620.0 600.0,470.0" fill="#0b0bc4"/>
<polygon points="615.0,470.0 617.2,470.0 624.0,479.0 659.9,513.4 715.3,568.0 710.8,577.8 715.3,600.0 713.8,600.0 704.8,574.8 677.8,547.8 653.9,517.9 629.9,495.4" fill="#1616ff"/>
<polyline points="617.2,470.0 624.0,479.0 659.9,513.4 715.3,568.0 710.8,577.8 715.3,600.0" fill="none" stroke="#7a0a1a" stroke-width="0.9"/>
<polyline points="801.8,434 826,456 840,472.5 848.2,485.8 849.7,505 848,522" fill="none" stroke="#7a0a1a" stroke-width="0.8"/>
</g>
<polygon points="616.0,470.0 614.5,467.8 607.7,449.9 606.2,434.9 615.2,412.4 639.2,396.7 666.9,394.4 641.4,399 621.9,410.9 609.2,446.9 615,470" fill="#9a8258"/><polyline points="616.0,470.0 614.5,467.8 607.7,449.9 606.2,434.9 615.2,412.4 639.2,396.7 666.9,394.4 689.3,395.2 697.5,398.5 711.8,391.9" fill="none" stroke="#6e0c0c" stroke-width="1"/>
<polygon points="609.2,446.9 621.9,410.9 641.4,399.0 666.9,395.2 689.3,396.0 697.5,399.3 711.8,392.7 752.4,407.2 801.8,432.6 827.2,454.3 843.7,470.8 854.2,485.8 857.0,495.8 855.2,506.9 850.6,529.0 843.2,545.5 830.3,562.1 813.7,576.9 799.0,586.1 782.4,592.5 758.4,595.3 738.4,597.3 717.6,603.0 713.8,600.0 704.8,574.8 677.8,547.8 653.9,517.9 629.9,495.4 615.0,470.0" fill="none" stroke="#000" stroke-width="1.6" stroke-linejoin="round"/>

<!-- sun -->
<g clip-path="url(#cSun)">
<g transform="translate(1040,275) scale(0.86)">
<path d="M0 -25 L3 -14 L9.6 -23 L8.6 -11.6 L17.7 -17.7 L13 -7.5 L23 -9.6 L15.4 -1.6 L25 0 L15.4 3 L23 9.6 L13 8.6 L17.7 17.7 L7.5 13 L9.6 23 L1.6 15.4 L0 25 L-3 15.4 L-9.6 23 L-8.6 13 L-17.7 17.7 L-13 7.5 L-23 9.6 L-15.4 1.6 L-25 0 L-15.4 -3 L-23 -9.6 L-13 -8.6 L-17.7 -17.7 L-7.5 -13 L-9.6 -23 L-1.6 -15.4 Z" fill="#ffe23a"/>
<circle r="14.5" fill="url(#gSun)"/>
</g></g>
<!-- compass -->
<text x="995" y="283" text-anchor="middle" font-family="Liberation Sans, sans-serif" font-weight="bold" font-size="11.5" fill="#000">Y</text>
<polygon points="987.2,285.6 1002.4,285.6 994.8,303.5" fill="url(#gGreen)"/>
<rect x="983.2" y="308" width="22.8" height="22.2" fill="#c2c2c2"/>
<circle cx="994.8" cy="319" r="7.6" fill="#2b3d6e"/>
<text x="994.8" y="323" text-anchor="middle" font-family="Liberation Sans, sans-serif" font-size="11.5" fill="#f2c89a">Z</text>
<polygon points="961.3,311.5 961.3,326.3 979.2,318.8" fill="url(#gDk)"/>
<polygon points="1028.7,311.5 1028.7,326.2 1010.3,318.8" fill="url(#gOr)"/>
<text x="1030.5" y="323" font-family="Liberation Sans, sans-serif" font-weight="bold" font-size="11.5" fill="#000">X</text>
<polygon points="987.2,352.8 1002.5,352.8 994.8,334.6" fill="url(#gDk2)"/>
<!-- scale bar -->
<g font-family="DejaVu Sans, Liberation Sans, sans-serif" font-size="10" fill="#111" text-anchor="middle" letter-spacing="0.3">
<text x="458.8" y="790">0</text><text x="524.8" y="790">200</text><text x="590.6" y="790">400</text><text x="656.4" y="790">600</text><text x="722.2" y="790">800</text><text x="788.2" y="790">1000</text><text x="854" y="790">1200</text>
</g>
<rect x="458" y="792" width="396" height="10" fill="#fff"/>
<g fill="#6c6c6c">
<rect x="524" y="792" width="66" height="5"/><rect x="656" y="792" width="66" height="5"/><rect x="788" y="792" width="66" height="5"/>
<rect x="458" y="797" width="66" height="5"/><rect x="590" y="797" width="66" height="5"/><rect x="722" y="797" width="66" height="5"/>
</g>
<path d="M457.5 791.6 H854 M457.5 802.4 H854" stroke="#000" stroke-width="1.1"/>
<path d="M458 792 V802 M854 792 V802" stroke="#8a8a8a" stroke-width="1"/>
<g font-family="DejaVu Sans, Liberation Sans, sans-serif" font-weight="bold" font-size="7.5" fill="#444" letter-spacing="0.2">
<text x="271" y="825">2000 fps | 0.500 ms/f</text>
<text x="1045.4" y="825" text-anchor="end">NVIDIA Corporation NVIDIA GeForce RTX 3080 Laptop GPU/PCIe/SSE2 | OpenGL v4.6.0 NVIDIA 536.45</text>
</g>

</svg>
<!--VIEWEND-->
<div class="a bl" style="left:265px;top:834px;width:783px;height:20px"></div>
<div class="t" style="left:268px;top:838px;color:#23253a;letter-spacing:0.18px">(918.01 | 946.68 | 820.00)</div>
</div>

<!-- ============ RIGHT ============ -->
<div id="right">
<div class="a bd" style="left:1052px;top:30px;width:227px;height:318px"></div>
<div class="a" style="left:1053px;top:31px;width:225px;height:18px;background:#e5e7eb"></div>
<div class="t" style="left:1058px;top:35px;font-weight:bold;font-size:11.5px;color:#9aa0b6;letter-spacing:0">Layers</div>
<div class="a" style="left:1053px;top:49px;width:225px;height:1px;background:#e0e2e7"></div>
<div class="a bl" style="left:1058px;top:55px;width:214px;height:28px"></div>
<div class="btn" style="left:1061px;top:58px;width:22px;height:22px"></div>
<div class="btn" style="left:1087px;top:58px;width:22px;height:22px"></div>
<div class="btn" style="left:1113px;top:58px;width:22px;height:22px"></div>
<div class="btn" style="left:1195px;top:58px;width:36px;height:22px"></div>
<div class="btn" style="left:1235px;top:58px;width:34px;height:22px"></div>
<svg style="left:1064px;top:61px" width="16" height="16"><use href="#addc"/></svg>
<svg style="left:1090px;top:61px" width="16" height="12"><use href="#fopen"/></svg>
<svg style="left:1097px;top:68px" width="9" height="9"><circle cx="4.5" cy="4.5" r="4.1" fill="url(#gbl2)" stroke="#2f6fc0" stroke-width="0.8"/><path d="M4.5 2.2 V6.8 M2.2 4.5 H6.8" stroke="#fff" stroke-width="1.5"/><path d="M4.5 2.6 V6.4 M2.6 4.5 H6.4" stroke="#1d3f8a" stroke-width="0.7"/></svg>
<svg style="left:1118px;top:63px" width="13" height="12"><defs><linearGradient id="grx" x1="0" y1="0" x2="0" y2="1"><stop offset="0" stop-color="#f08a7a"/><stop offset="1" stop-color="#cc2a1e"/></linearGradient></defs><path d="M2.2 0.5 L6.3 4.2 L10.4 0.5 L12.3 2.4 L8.4 6 L12.3 9.6 L10.4 11.5 L6.3 7.8 L2.2 11.5 L0.3 9.6 L4.2 6 L0.3 2.4 Z" fill="url(#grx)" stroke="#c43a2c" stroke-width="0.6" stroke-linejoin="round"/></svg>
<svg style="left:1200px;top:61px" width="8" height="15"><path d="M2.4 0.5 H5.6 V8.5 H7.8 L4 14.5 L0.2 8.5 H2.4 Z" fill="#6cc43c" stroke="#3f8f1f" stroke-width="0.7" stroke-linejoin="round"/></svg>
<div class="t" style="left:1209px;top:59px;font-size:8.5px;font-weight:bold;color:#2a3fa8;line-height:10px;letter-spacing:0">A</div>
<div class="t" style="left:1209px;top:67px;font-size:8.5px;font-weight:bold;color:#c81e1e;line-height:10px;letter-spacing:0">Z</div>
<svg style="left:1219px;top:67px" width="7" height="4"><use href="#dd" fill="#8c8f9c"/></svg>
<svg style="left:1239px;top:62px" width="16" height="15"><path d="M4.6 3.4 L8 6.8 L12.6 12.8 C13.2 13.6 12.2 14.6 11.4 14 L5.8 9 L2.6 5.6 C1.4 4.4 1.6 2.4 3 1.4 L4.6 3 Z" fill="#c7d3e6" stroke="#5a6f98" stroke-width="0.8" stroke-linejoin="round"/><path d="M6.4 1.6 C8 0.2 11 0.4 12.6 1.6 L14.8 4.6 L13.6 5.6 L11.8 3.6 C10.6 3.4 9.4 3.8 8.6 4.8 Z" fill="#e8edf6" stroke="#5a6f98" stroke-width="0.8" stroke-linejoin="round"/><path d="M1.4 13.6 L8.2 6" stroke="#c8861c" stroke-width="2.8" stroke-linecap="round"/><path d="M1.4 13.6 L8.2 6" stroke="#f8c44a" stroke-width="1.5" stroke-linecap="round"/><path d="M1.2 13.8 L2.4 12.5" stroke="#e04a2a" stroke-width="1.8" stroke-linecap="round"/></svg>
<svg style="left:1257px;top:67px" width="7" height="4"><use href="#dd" fill="#8c8f9c"/></svg>

<div class="btn" style="left:1058px;top:87px;width:214px;height:22px"></div>
<div class="a" style="left:1062px;top:90px;width:16px;height:16px;background:#b4dfbf;border:1px solid #84c896"></div>
<div class="a" style="left:1062px;top:95px;width:16px;height:1px;background:#3f8a58"></div>
<div class="a" style="left:1062px;top:100px;width:16px;height:1px;background:#3f8a58"></div>
<div class="t" style="left:1082px;top:92px;color:#1a1c2e;letter-spacing:0">&lt;Custom&gt;</div>
<svg style="left:1260px;top:97px" width="7" height="4"><use href="#dd" fill="#8c8f9c"/></svg>
<div class="a bd w" style="left:1058px;top:113px;width:214px;height:202px"></div>
<div class="a hd" style="left:1059px;top:114px;width:212px;height:20px"></div>
<div class="a" style="left:1059px;top:134px;width:212px;height:1px;background:#b9bcc6"></div>
<div class="a" style="left:1185px;top:114px;width:1px;height:20px;background:#cfd2d9"></div>
<div class="a" style="left:1210px;top:114px;width:1px;height:20px;background:#cfd2d9"></div>
<div class="a" style="left:1235px;top:114px;width:1px;height:20px;background:#cfd2d9"></div>
<div class="t" style="left:1062px;top:118px">Name</div>
<svg style="left:1190px;top:118px" width="16" height="12"><use href="#eye"/></svg><svg style="left:1216px;top:117px" width="14" height="14"><use href="#wire" stroke="#222"/></svg><div class="cw" style="left:1246px;top:117px"></div>
<div class="a" style="left:1095px;top:136px;width:176px;height:17px;background:#eeeff2"></div>
<svg style="left:1066px;top:142px" width="4" height="7"><path d="M0 0 L4 3.5 L0 7 Z" fill="#8a8a8e"/></svg><svg style="left:1077px;top:139px" width="16" height="13"><use href="#fold"/></svg><div class="t" style="left:1098px;top:139px">Production Surf...</div><svg style="left:1190px;top:139px" width="16" height="12"><use href="#eyeoff"/></svg><svg style="left:1216px;top:138px" width="14" height="14"><use href="#wire" stroke="#222"/></svg><svg style="left:1238px;top:137px" width="16" height="16"><rect x="0.5" y="0.5" width="15" height="15" fill="#fff" stroke="#a8a8a8" stroke-width="1"/><path d="M0.8 8 L10.5 0.8 M3.5 15.2 L15.2 4.8 M11 15.2 L15.2 12" stroke="#ff1414" stroke-width="1.3"/></svg><svg style="left:1260px;top:143px" width="7" height="4"><use href="#dd" fill="#1e1e1e"/></svg>
<svg style="left:1066px;top:160px" width="4" height="7"><path d="M0 0 L4 3.5 L0 7 Z" fill="#8a8a8e"/></svg><svg style="left:1077px;top:157px" width="16" height="13"><use href="#fold"/></svg><div class="t" style="left:1098px;top:157px">Schedule Surfa...</div><svg style="left:1190px;top:157px" width="16" height="12"><use href="#eyeoff"/></svg><svg style="left:1216px;top:156px" width="14" height="14"><use href="#wire" stroke="#222"/></svg><svg style="left:1238px;top:155px" width="16" height="16"><rect x="0.5" y="0.5" width="15" height="15" fill="#fff" stroke="#a8a8a8" stroke-width="1"/><path d="M0.8 8 L10.5 0.8 M3.5 15.2 L15.2 4.8 M11 15.2 L15.2 12" stroke="#ff1414" stroke-width="1.3"/></svg><svg style="left:1260px;top:161px" width="7" height="4"><use href="#dd" fill="#1e1e1e"/></svg>
<svg style="left:1078px;top:174px" width="15" height="14"><use href="#hearts"/></svg><div class="t" style="left:1099px;top:175px">finalcut</div><svg style="left:1190px;top:175px" width="16" height="12"><use href="#eyeoff"/></svg><svg style="left:1216px;top:174px" width="14" height="14"><use href="#wire" stroke="#aaa"/></svg><div class="a" style="left:1238px;top:173px;width:16px;height:16px;background:#d2d2d2;border:1px solid #aaa"></div><svg style="left:1260px;top:179px" width="7" height="4"><use href="#dd" fill="#1e1e1e"/></svg>
<div class="a" style="left:1111px;top:320px;width:161px;height:24px;background:linear-gradient(#d6d8de,#ebecef 85%)"></div>
<div class="a" style="left:1057px;top:320px;width:1px;height:24px;background:linear-gradient(#a5a9b5,#ebecef)"></div>
<div class="a" style="left:1111px;top:320px;width:1px;height:24px;background:linear-gradient(#a5a9b5,#ebecef)"></div>
<div class="t" style="left:1066px;top:326px;color:#1a1c2e">Layers</div>
<div class="t" style="left:1121px;top:326px;color:#1a1c2e">History</div>

<div class="a bd" style="left:1052px;top:352px;width:227px;height:502px"></div>
<div class="a" style="left:1053px;top:353px;width:225px;height:19px;background:#e5e7eb"></div>
<div class="t" style="left:1058px;top:357px;font-weight:bold;font-size:11.5px;color:#9aa0b6;letter-spacing:0.1px">Other Entities</div>
<div class="a" style="left:1053px;top:372px;width:225px;height:1px;background:#e0e2e7"></div>
<div class="a bl" style="left:1056px;top:375px;width:219px;height:152px"></div>
<div class="a" style="left:1057px;top:376px;width:217px;height:19px;background:linear-gradient(#f0f1f4,#e4e6ea);border-radius:2px 2px 0 0"></div>
<div class="t" style="left:1067px;top:379px">Surfaces</div>
<div class="a bd w" style="left:1059px;top:396px;width:212px;height:128px"></div>
<div class="a hd" style="left:1060px;top:397px;width:210px;height:21px"></div>
<div class="a" style="left:1060px;top:418px;width:210px;height:1px;background:#b9bcc6"></div><div class="a" style="left:1075px;top:397px;width:1px;height:97px;background:#cfd2d9"></div><div class="a" style="left:1103px;top:397px;width:1px;height:97px;background:#cfd2d9"></div><div class="a" style="left:1219px;top:397px;width:1px;height:97px;background:#cfd2d9"></div><svg style="left:1081px;top:401px" width="16" height="12"><use href="#eye"/></svg><div class="t" style="left:1107px;top:401px">Name</div><div class="cw" style="left:1238px;top:400px"></div>
<div class="a" style="left:1060px;top:419px;width:15px;height:76px;background:#f1f2f4"></div><div class="a" style="left:1076px;top:476px;width:194px;height:18px;background:#eeeff2"></div>
<div class="a" style="left:1060px;top:437px;width:210px;height:1px;background:#cfd2d9"></div><svg style="left:1081px;top:422px" width="16" height="12"><use href="#eyeoff"/></svg><div class="t" style="left:1107px;top:422px;color:#1e1e1e">Schedule Start</div><svg style="left:1222px;top:420px" width="46" height="16"><defs><pattern id="pA" x="4.4" y="-0.8" width="8" height="8" patternUnits="userSpaceOnUse"><rect width="8" height="8" fill="#fdf4e6"/><path d="M4 0.4 L7.6 4 L4 7.6 L0.4 4 Z" fill="#b8d8da"/></pattern></defs><rect x="0.5" y="0.5" width="45" height="15" fill="url(#pA)" stroke="#9b9b9b"/></svg>
<div class="a" style="left:1060px;top:456px;width:210px;height:1px;background:#cfd2d9"></div><svg style="left:1081px;top:441px" width="16" height="12"><use href="#eyeoff"/></svg><div class="t" style="left:1107px;top:441px;color:#1e1e1e">Schedule End</div><div class="a" style="left:1222px;top:439px;width:46px;height:16px;background:#ffe9c9;border:1px solid #9b9b9b"></div>
<div class="a" style="left:1060px;top:475px;width:210px;height:1px;background:#cfd2d9"></div><svg style="left:1081px;top:460px" width="16" height="12"><use href="#eye"/></svg><div class="t" style="left:1107px;top:460px;color:#1e1e1e">Production Start</div><svg style="left:1222px;top:458px" width="46" height="16"><defs><pattern id="pB" x="4.4" y="-0.8" width="8" height="8" patternUnits="userSpaceOnUse"><rect width="8" height="8" fill="#e3ccad"/><path d="M4 0.4 L7.6 4 L4 7.6 L0.4 4 Z" fill="#9db5a6"/></pattern></defs><rect x="0.5" y="0.5" width="45" height="15" fill="url(#pB)" stroke="#9b9b9b"/></svg>
<div class="a" style="left:1060px;top:494px;width:210px;height:1px;background:#cfd2d9"></div><svg style="left:1081px;top:479px" width="16" height="12"><use href="#eye"/></svg><div class="t" style="left:1107px;top:479px;color:#1e1e1e">Production End</div><div class="a" style="left:1222px;top:477px;width:46px;height:16px;background:#be9762;border:1px solid #9b9b9b"></div>
<svg style="left:1066px;top:482px" width="4" height="7"><path d="M0 0 L4 3.5 L0 7 Z" fill="#1e1e1e"/></svg>
<div class="a" style="left:1103px;top:476px;width:1px;height:18px;background:#cfd2d9"></div><div class="a" style="left:1219px;top:476px;width:1px;height:18px;background:#cfd2d9"></div>
<svg style="left:1158px;top:528px" width="14" height="3"><path d="M0.5 0 V3 M2.5 0 V3 M4.5 0 V3 M6.5 0 V3 M8.5 0 V3 M10.5 0 V3 M12.5 0 V3" stroke="#9a9eab" stroke-width="1"/></svg>
<div class="a bl" style="left:1056px;top:532px;width:219px;height:318px"></div>
<div class="a" style="left:1057px;top:533px;width:217px;height:19px;background:linear-gradient(#f0f1f4,#e4e6ea);border-radius:2px 2px 0 0"></div>
<div class="t" style="left:1067px;top:536px">Domains</div>
<div class="a bd w" style="left:1059px;top:553px;width:212px;height:294px"></div>
<div class="a hd" style="left:1060px;top:554px;width:210px;height:21px"></div>
<div class="a" style="left:1060px;top:575px;width:210px;height:1px;background:#b9bcc6"></div><div class="a" style="left:1075px;top:554px;width:1px;height:192px;background:#cfd2d9"></div><div class="a" style="left:1102px;top:554px;width:1px;height:192px;background:#cfd2d9"></div><div class="a" style="left:1219px;top:554px;width:1px;height:192px;background:#cfd2d9"></div><svg style="left:1081px;top:559px" width="16" height="12"><use href="#eye"/></svg><div class="t" style="left:1107px;top:559px">Name</div><div class="cw" style="left:1238px;top:557px"></div>
<div class="a" style="left:1060px;top:576px;width:15px;height:171px;background:#f1f2f4"></div><div class="a" style="left:1076px;top:728px;width:194px;height:18px;background:#eeeff2"></div>
<div class="a" style="left:1060px;top:594px;width:210px;height:1px;background:#cfd2d9"></div><svg style="left:1081px;top:579px" width="16" height="12"><use href="#eye"/></svg><div class="t" style="left:1107px;top:579px;color:#1e1e1e">Cut Not Planned</div><div class="a" style="left:1222px;top:577px;width:46px;height:16px;background:#ff0000;border:1px solid #9b9b9b"></div>
<div class="a" style="left:1060px;top:613px;width:210px;height:1px;background:#cfd2d9"></div><svg style="left:1081px;top:598px" width="16" height="12"><use href="#eye"/></svg><div class="t" style="left:1107px;top:598px;color:#8a8a8a">Cut Late</div><div class="a" style="left:1222px;top:596px;width:46px;height:16px;background:#ff00d2;border:1px solid #9b9b9b"></div>
<div class="a" style="left:1060px;top:632px;width:210px;height:1px;background:#cfd2d9"></div><svg style="left:1081px;top:617px" width="16" height="12"><use href="#eye"/></svg><div class="t" style="left:1107px;top:617px;color:#8a8a8a">Over Cut</div><div class="a" style="left:1222px;top:615px;width:46px;height:16px;background:#00ffff;border:1px solid #9b9b9b"></div>
<div class="a" style="left:1060px;top:651px;width:210px;height:1px;background:#cfd2d9"></div><svg style="left:1081px;top:636px" width="16" height="12"><use href="#eye"/></svg><div class="t" style="left:1107px;top:636px;color:#1e1e1e">Cut in Plan</div><div class="a" style="left:1222px;top:634px;width:46px;height:16px;background:#46b946;border:1px solid #9b9b9b"></div>
<div class="a" style="left:1060px;top:670px;width:210px;height:1px;background:#cfd2d9"></div><svg style="left:1081px;top:655px" width="16" height="12"><use href="#eye"/></svg><div class="t" style="left:1107px;top:655px;color:#1e1e1e">Planned Not Cut</div><div class="a" style="left:1222px;top:653px;width:46px;height:16px;background:#ffa500;border:1px solid #9b9b9b"></div>
<div class="a" style="left:1060px;top:689px;width:210px;height:1px;background:#cfd2d9"></div><svg style="left:1081px;top:674px" width="16" height="12"><use href="#eye"/></svg><div class="t" style="left:1107px;top:674px;color:#1e1e1e">Cut Early</div><div class="a" style="left:1222px;top:672px;width:46px;height:16px;background:#0000ff;border:1px solid #9b9b9b"></div>
<div class="a" style="left:1060px;top:708px;width:210px;height:1px;background:#cfd2d9"></div><svg style="left:1081px;top:693px" width="16" height="12"><use href="#eyeoff"/></svg><div class="t" style="left:1107px;top:693px;color:#8a8a8a">Filled Not Planned</div><div class="a" style="left:1222px;top:691px;width:46px;height:16px;background:#696a7e;border:1px solid #9b9b9b"></div>
<div class="a" style="left:1060px;top:727px;width:210px;height:1px;background:#cfd2d9"></div><svg style="left:1081px;top:712px" width="16" height="12"><use href="#eyeoff"/></svg><div class="t" style="left:1107px;top:712px;color:#8a8a8a">Filled in Plan</div><div class="a" style="left:1222px;top:710px;width:46px;height:16px;background:#696a7e;border:1px solid #9b9b9b"></div>
<div class="a" style="left:1060px;top:746px;width:210px;height:1px;background:#cfd2d9"></div><svg style="left:1081px;top:731px" width="16" height="12"><use href="#eyeoff"/></svg><div class="t" style="left:1107px;top:731px;color:#1e1e1e">Planned Not Filled</div><div class="a" style="left:1222px;top:729px;width:46px;height:16px;background:#696a7e;border:1px solid #9b9b9b"></div>
<svg style="left:1066px;top:734px" width="4" height="7"><path d="M0 0 L4 3.5 L0 7 Z" fill="#1e1e1e"/></svg>
<div class="a" style="left:1102px;top:728px;width:1px;height:18px;background:#cfd2d9"></div><div class="a" style="left:1219px;top:728px;width:1px;height:18px;background:#cfd2d9"></div>
</div>

</body></html>
